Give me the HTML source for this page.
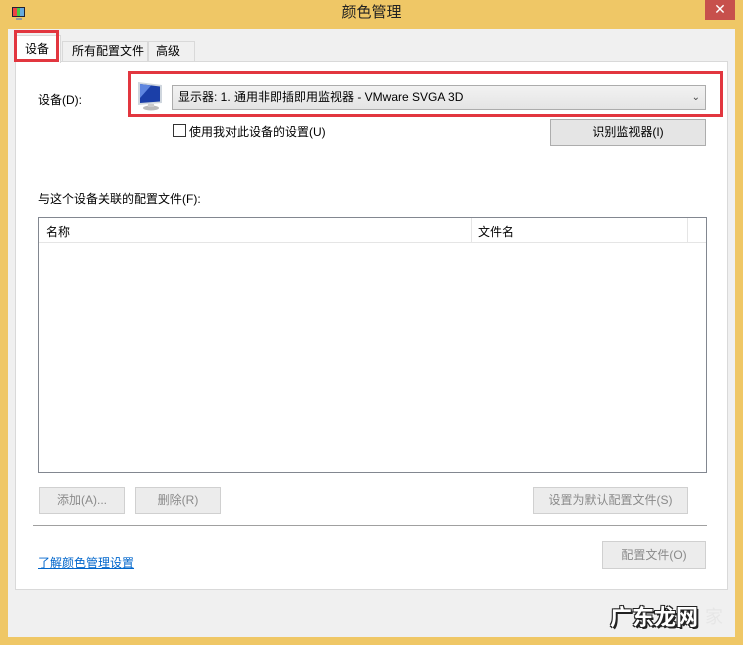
<!DOCTYPE html>
<html><head><meta charset="utf-8"><style>
*{box-sizing:border-box;margin:0;padding:0}
body{width:743px;height:645px;background:#efc766;position:relative;overflow:hidden;font-family:"Liberation Sans","Noto Sans CJK SC",sans-serif;font-size:12px;color:#000}
.a{position:absolute}
.btn{position:absolute;background:#e5e5e5;border:1px solid #adadad;text-align:center;color:#000}
.dis{background:#ececec;border-color:#d0d0d0;color:#8a8a8a}
.red{position:absolute;border:3px solid #e2363f}
</style></head><body>
<div class="a" style="left:0;top:0;width:743px;height:28px;text-align:center;font-size:15px;line-height:26px;color:#222">颜色管理</div>
<div class="a" style="left:705px;top:0;width:30px;height:20px;background:#c7504c;color:#fff;text-align:center;line-height:19px;font-size:14px">✕</div>
<svg class="a" style="left:11px;top:6px" width="16" height="16"><rect x="1" y="1" width="13" height="10" fill="#223" /><rect x="2" y="2" width="11" height="8" fill="#6ad"/><rect x="2" y="2" width="4" height="8" fill="#e44"/><rect x="6" y="2" width="3" height="8" fill="#4c4"/><rect x="5" y="12" width="6" height="2" fill="#999"/></svg>
<div class="a" style="left:8px;top:29px;width:727px;height:608px;background:#f0f0f0"></div>
<div class="a" style="left:15px;top:61px;width:713px;height:529px;background:#fff;border:1px solid #d9d9d9"></div>
<div class="a" style="left:62px;top:41px;width:86px;height:21px;background:#f0f0f0;border:1px solid #d9d9d9;line-height:19px;padding-left:9px">所有配置文件</div>
<div class="a" style="left:148px;top:41px;width:47px;height:21px;background:#f0f0f0;border:1px solid #d9d9d9;line-height:19px;padding-left:7px">高级</div>
<div class="a" style="left:15px;top:35px;width:46px;height:28px;background:#fff;border:1px solid #d9d9d9;border-bottom:none;line-height:26px;padding-left:9px">设备</div>
<div class="red" style="left:14px;top:30px;width:45px;height:32px"></div>
<div class="a" style="left:38px;top:91px">设备(D):</div>
<svg class="a" style="left:135px;top:80px" width="32" height="32"><path d="M3 2 L27 5 L27 23 L3 25 Z" fill="#cfd6de"/><path d="M5 4 L25 6.5 L25 21.5 L5 23 Z" fill="#1b3fa8"/><path d="M5 4 L16 5.5 L5 18 Z" fill="#5f86e0"/><ellipse cx="16" cy="28" rx="8" ry="2.5" fill="#bbb"/><rect x="13" y="24" width="6" height="3" fill="#ccc"/></svg>
<div class="a" style="left:172px;top:85px;width:534px;height:25px;background:linear-gradient(#f2f2f2,#e4e4e4);border:1px solid #acacac;line-height:23px;padding-left:5px">显示器: 1. 通用非即插即用监视器 - VMware SVGA 3D<span style="position:absolute;right:5px;top:0;font-size:10px;color:#444">⌄</span></div>
<div class="red" style="left:128px;top:71px;width:595px;height:46px"></div>
<div class="a" style="left:173px;top:124px;width:13px;height:13px;border:1px solid #333;background:#fff"></div>
<div class="a" style="left:189px;top:123px">使用我对此设备的设置(U)</div>
<div class="btn" style="left:550px;top:119px;width:156px;height:27px;line-height:25px">识别监视器(I)</div>
<div class="a" style="left:38px;top:190px">与这个设备关联的配置文件(F):</div>
<div class="a" style="left:38px;top:217px;width:669px;height:256px;border:1px solid #828790;background:#fff"></div>
<div class="a" style="left:39px;top:242px;width:667px;height:1px;background:#e5e5e5"></div>
<div class="a" style="left:471px;top:218px;width:1px;height:24px;background:#e5e5e5"></div>
<div class="a" style="left:687px;top:218px;width:1px;height:24px;background:#e5e5e5"></div>
<div class="a" style="left:46px;top:223px">名称</div>
<div class="a" style="left:478px;top:223px">文件名</div>
<div class="btn dis" style="left:39px;top:487px;width:86px;height:27px;line-height:25px">添加(A)...</div>
<div class="btn dis" style="left:135px;top:487px;width:86px;height:27px;line-height:25px">删除(R)</div>
<div class="btn dis" style="left:533px;top:487px;width:155px;height:27px;line-height:25px">设置为默认配置文件(S)</div>
<div class="a" style="left:33px;top:525px;width:674px;height:1px;background:#a0a0a0"></div>
<div class="a" style="left:38px;top:554px;color:#0066cc;text-decoration:underline">了解颜色管理设置</div>
<div class="btn dis" style="left:602px;top:541px;width:104px;height:28px;line-height:26px">配置文件(O)</div>
<div class="a" style="left:610px;top:600px;font-size:22px;font-weight:bold;color:#fff;text-shadow:1px 1px 0 #222,-1px -1px 0 #222,1px -1px 0 #222,-1px 1px 0 #222,2px 2px 0 #222">广东龙网</div>
<div class="a" style="left:705px;top:603px;font-size:18px;color:#e6e6e6">家</div>
</body></html>
